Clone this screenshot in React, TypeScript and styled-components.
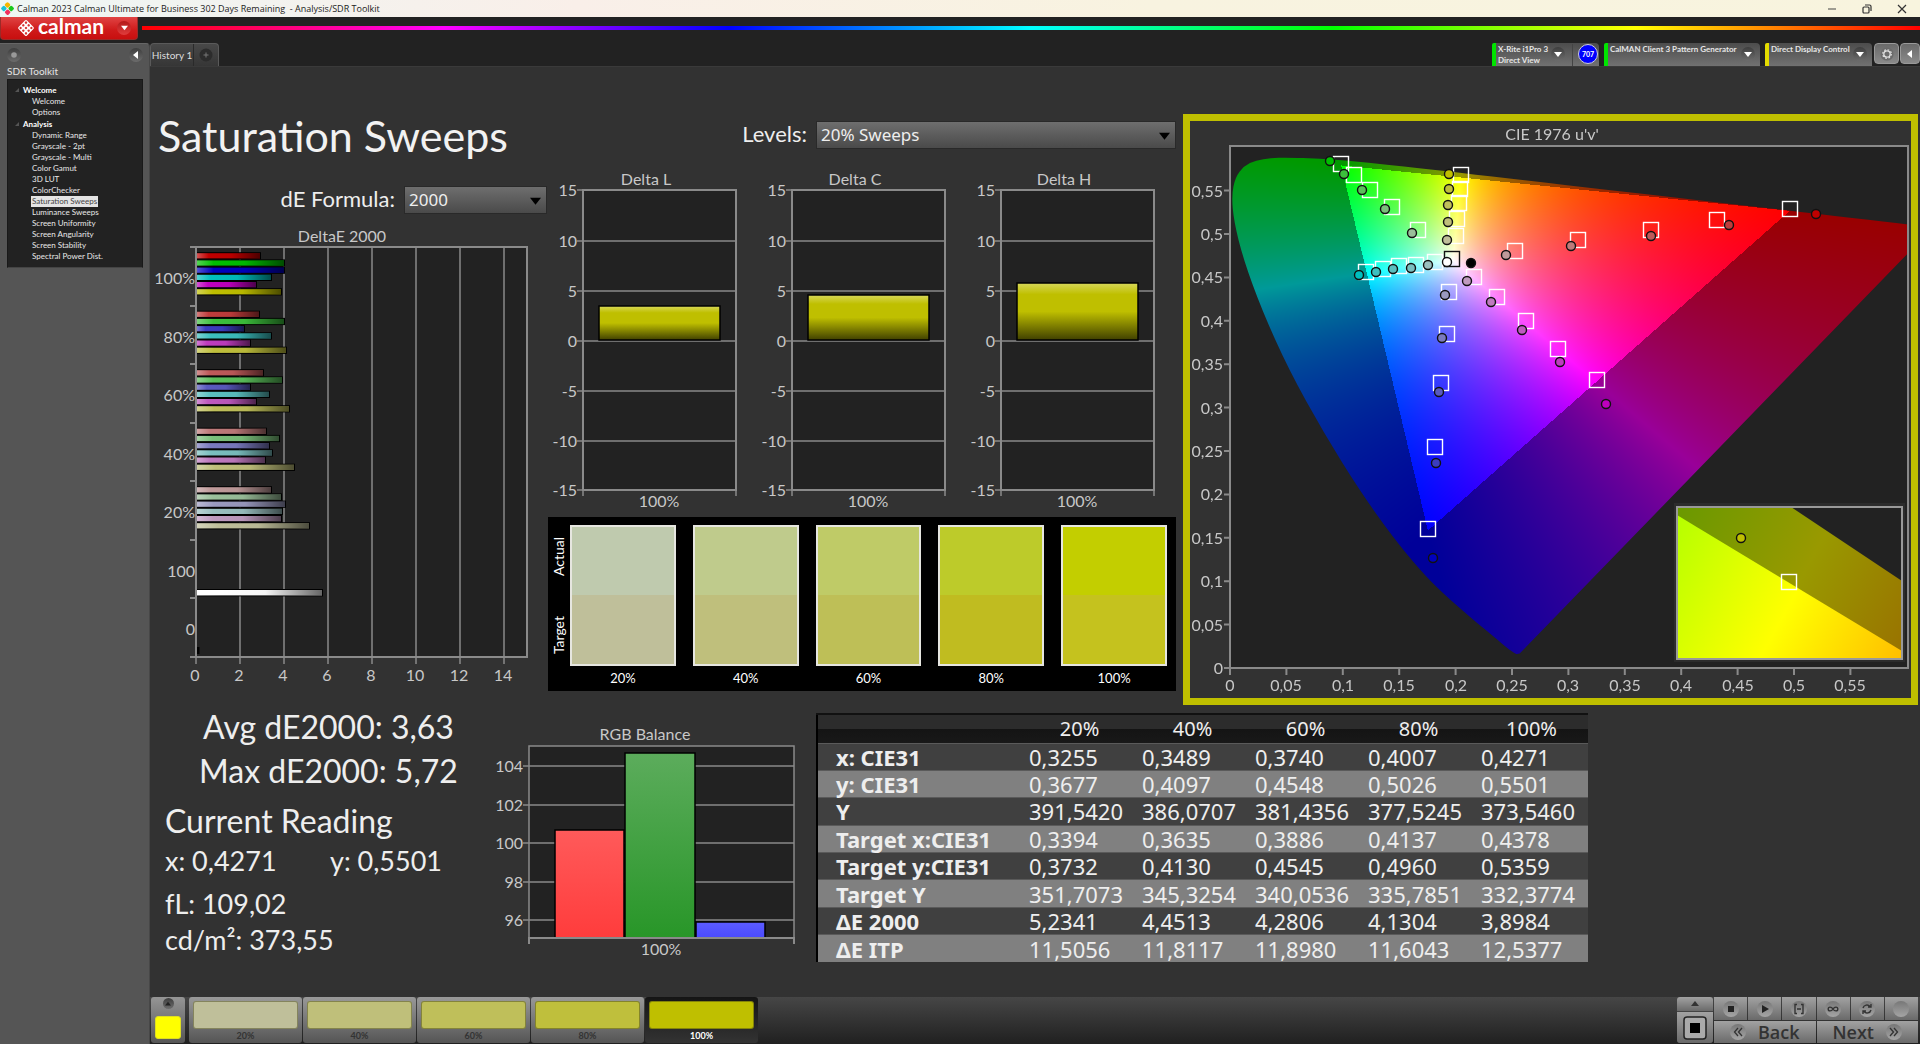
import React, { useLayoutEffect, useRef } from "react";
import styled, { createGlobalStyle } from "styled-components";

/* ------------------------------------------------------------------ */
/* Data                                                                */
/* ------------------------------------------------------------------ */

type RGB = [number, number, number];
const FULL = 191;
const WASH: Record<string, number> = { "100%": 0, "80%": 60, "60%": 90, "40%": 122, "20%": 154 };
const HUES: Record<string, RGB> = {
  red: [1, 0, 0],
  green: [0, 1, 0],
  blue: [0, 0, 1],
  cyan: [0, 1, 1],
  magenta: [1, 0, 1],
  yellow: [1, 1, 0],
};
const mixHue = (hue: string, level: string): string =>
  `rgb(${HUES[hue].map((c) => (c ? FULL : WASH[level])).join(",")})`;

const deltaE: { level: string; lengths: number[] }[] = [
  { level: "100%", lengths: [65, 89, 89, 76, 61, 86] },
  { level: "80%", lengths: [64, 89, 49, 76, 55, 91] },
  { level: "60%", lengths: [68, 87, 55, 74, 61, 94] },
  { level: "40%", lengths: [71, 84, 74, 77, 70, 99] },
  { level: "20%", lengths: [76, 86, 90, 87, 86, 114] },
];

const tree = [
  { name: "Welcome", items: ["Welcome", "Options"] },
  {
    name: "Analysis",
    items: [
      "Dynamic Range",
      "Grayscale - 2pt",
      "Grayscale - Multi",
      "Color Gamut",
      "3D LUT",
      "ColorChecker",
      "Saturation Sweeps",
      "Luminance Sweeps",
      "Screen Uniformity",
      "Screen Angularity",
      "Screen Stability",
      "Spectral Power Dist.",
    ],
  },
];

const swatches = [
  { level: "20%", actual: "#bfcaae", target: "#bfbf9a" },
  { level: "40%", actual: "#bfcb8c", target: "#bfbf7c" },
  { level: "60%", actual: "#bfcb67", target: "#bebf57" },
  { level: "80%", actual: "#bdcb2a", target: "#c0bc20" },
  { level: "100%", actual: "#c3ce00", target: "#c5c21e" },
];

const levels = ["20%", "40%", "60%", "80%", "100%"];

const readings = [
  { name: "x: CIE31", cells: ["0,3255", "0,3489", "0,3740", "0,4007", "0,4271"] },
  { name: "y: CIE31", cells: ["0,3677", "0,4097", "0,4548", "0,5026", "0,5501"] },
  { name: "Y", cells: ["391,5420", "386,0707", "381,4356", "377,5245", "373,5460"] },
  { name: "Target x:CIE31", cells: ["0,3394", "0,3635", "0,3886", "0,4137", "0,4378"] },
  { name: "Target y:CIE31", cells: ["0,3732", "0,4130", "0,4545", "0,4960", "0,5359"] },
  { name: "Target Y", cells: ["351,7073", "345,3254", "340,0536", "335,7851", "332,3774"] },
  { name: "ΔE 2000", cells: ["5,2341", "4,4513", "4,2806", "4,1304", "3,8984"] },
  { name: "ΔE ITP", cells: ["11,5056", "11,8117", "11,8980", "11,6043", "12,5377"] },
];

/* ------------------------------------------------------------------ */
/* Styles                                                              */
/* ------------------------------------------------------------------ */

const UI = `Lato, "Noto Sans", sans-serif`;
const SEGOE = `"Noto Sans", "Open Sans", sans-serif`;

const Global = createGlobalStyle`
  *, *::before, *::after { box-sizing: border-box; }
  body { margin: 0; background: #222; font-family: ${UI}; color: #eee; }
  button, select { font: inherit; color: inherit; border: 0; padding: 0; margin: 0; background: none; }
  svg { display: block; }
  h1, h2, p, ul { margin: 0; padding: 0; font-weight: 400; }
  ul { list-style: none; }
`;

const Window = styled.div`
  min-height: 100vh;
  display: flex;
  flex-direction: column;
`;

const TitleBar = styled.header`
  height: 17px;
  display: flex;
  align-items: center;
  gap: 3px;
  padding-left: 1px;
  background: linear-gradient(90deg, #eef6f4, #f9efe9 30%, #f8f3e0 60%, #f8f4de);
  color: #222;
  font: 9px/16px "Open Sans", ${SEGOE};
  white-space: pre;
`;
const WindowButtons = styled.div`
  margin-left: auto;
  display: flex;
  gap: 11px;
  padding-right: 6px;
`;
const WindowButton = styled.button`
  width: 24px;
  height: 16px;
  display: grid;
  place-items: center;
`;

const BrandBar = styled.div`
  display: flex;
  gap: 4px;
  height: 26px;
`;
const BrandButton = styled.button`
  width: 138px;
  height: 23px;
  padding: 0 6px 1px 16px;
  display: flex;
  align-items: center;
  gap: 3px;
  border: 1px solid #9c2a28;
  border-top: 0;
  border-radius: 0 0 4px 4px;
  background: linear-gradient(#e04444, #cf1a1a 60%, #c80f0f);
  color: #fff;
  font: 700 21px/20px ${UI};
`;
const BrandName = styled.span`
  flex: 1;
  text-align: left;
  padding-bottom: 4px;
`;
const Rainbow = styled.div`
  flex: 1;
  height: 4px;
  margin-top: 9px;
  background: linear-gradient(90deg, #f00, #f0f 17%, #00f 33%, #0ff 50%, #0f0 67%, #ff0 84%, #f00);
`;

const Shell = styled.div`
  flex: 1;
  display: grid;
  grid-template-columns: 150px minmax(0, 1fr);
`;

const Sidebar = styled.aside`
  background: #555;
  border-top: 1px solid #666;
  border-right: 1px solid #474747;
  border-radius: 0 4px 0 0;
  padding: 4px 6px 0 7px;
`;
const SidebarTop = styled.div`
  display: flex;
  justify-content: space-between;
  height: 16px;
`;
const RoundButton = styled.button<{ $size?: number }>`
  width: ${(p) => p.$size ?? 14}px;
  height: ${(p) => p.$size ?? 14}px;
  border-radius: 50%;
  display: grid;
  place-items: center;
  flex: none;
  background: linear-gradient(#3e3e3e, #6c6c6c);
`;
const BrandArrow = styled.span`
  width: 14px;
  height: 14px;
  border-radius: 50%;
  display: grid;
  place-items: center;
  background: linear-gradient(#b31a1a, #e03c3c);
`;
const SidebarTitle = styled.h2`
  font-size: 10px;
  line-height: 15px;
  color: #e4e4e4;
`;
const Tree = styled.nav`
  background: #222;
  border: 1px solid #191919;
  border-bottom-color: #444;
  padding: 4px 0 5px;
`;
const Branch = styled.div`
  display: flex;
  align-items: center;
  gap: 4px;
  height: 12px;
  padding-left: 7px;
  font-size: 8px;
  font-weight: 700;
  color: #fff;
`;
const Leaf = styled.button<{ $on: boolean }>`
  display: block;
  height: 11px;
  margin-left: 23px;
  padding: 0 1px;
  font-size: 8px;
  line-height: 11px;
  color: ${(p) => (p.$on ? "#444" : "#e8e8e8")};
  background: ${(p) => (p.$on ? "#e4e4e4" : "none")};
`;

const Main = styled.main`
  display: flex;
  flex-direction: column;
  min-width: 0;
`;
const TabRow = styled.div`
  display: flex;
  height: 23px;
  justify-content: space-between;
`;
const Tabs = styled.div`
  display: flex;
  border: 1px solid #5a5a5a;
  border-bottom: 0;
  border-radius: 4px 4px 0 0;
  background: linear-gradient(#484848, #363636);
`;
const Tab = styled.button`
  width: 43px;
  border-right: 1px solid #2a2a2a;
  font-size: 10px;
  color: #ddd;
`;
const AddTab = styled.button`
  width: 24px;
  display: grid;
  place-items: center;
`;
const Devices = styled.div`
  display: flex;
  gap: 5px;
`;
const Device = styled.div<{ $tone: string; $w: number; $end?: number }>`
  width: ${(p) => p.$w}px;
  display: flex;
  border-left: 4px solid ${(p) => p.$tone};
  border-radius: 2px 4px 0 0;
  background: linear-gradient(#4c4c4c, #717171);
  font-size: 8px;
  line-height: 11px;
  font-weight: 700;
  color: #e6e6e6;
  padding: 1px ${(p) => p.$end ?? 5}px 0 2px;
`;
const DeviceName = styled.span`
  flex: 1;
  white-space: nowrap;
`;
const DeviceDrop = styled(RoundButton)`
  margin-top: 3px;
`;
const MeterSlot = styled.span`
  margin-left: 7px;
  padding-left: 5px;
  border-left: 1px solid #444;
`;
const Meter = styled.span`
  display: block;
  width: 20px;
  height: 20px;
  border-radius: 50%;
  border: 1px solid #ccd;
  background: #00f;
  color: #fff;
  font-size: 7px;
  line-height: 18px;
  text-align: center;
`;
const CornerButtons = styled.div`
  display: flex;
  gap: 1px;
  margin-left: -3px;
`;
const CornerButton = styled.button<{ $w: number }>`
  width: ${(p) => p.$w}px;
  height: 21px;
  display: grid;
  place-items: center;
  border: 1px solid #999;
  border-radius: 4px;
  background: linear-gradient(#6a6a6a, #8a8a8a);
`;

const Board = styled.div`
  flex: 1;
  background: #323232;
  border-top: 1px solid #3a3a3a;
  padding: 47px 2px 0 0;
`;
const UpperRow = styled.section`
  display: grid;
  grid-template-columns: 398fr 635fr 735fr;
`;
const LowerRow = styled.section`
  display: grid;
  grid-template-columns: 353fr 313fr 772fr 330fr;
  align-items: start;
`;
const Column = styled.div`
  min-width: 0;
`;
const Title = styled.h1`
  font-size: 43px;
  line-height: 44px;
  padding-left: 8px;
  color: #f2f2f2;
  white-space: nowrap;
`;
const Field = styled.div<{ $top: number; $right: number }>`
  display: flex;
  justify-content: flex-end;
  align-items: center;
  gap: 9px;
  height: 28px;
  margin-top: ${(p) => p.$top}px;
  padding-right: ${(p) => p.$right}px;
`;
const FieldLabel = styled.label`
  font-size: 22px;
  line-height: 26px;
  padding-bottom: 2px;
  color: #eee;
`;
const SelectBox = styled.div<{ $w: number }>`
  display: grid;
  width: ${(p) => p.$w}px;
  align-items: center;
  > * { grid-area: 1 / 1; }
  > svg { justify-self: end; margin-right: 6px; pointer-events: none; }
`;
const Select = styled.select`
  appearance: none;
  width: 100%;
  height: 28px;
  padding: 0 4px;
  border: 1px solid #292929;
  background: linear-gradient(#6e6e6e, #4a4a4a);
  color: #eee;
  font: 17px/24px ${SEGOE};
`;

const ChartSvg = styled.svg`
  width: 100%;
  height: auto;
  overflow: visible;
  font-family: ${UI};
  font-size: 16px;
  fill: #c8c8c8;
`;
const DeltaEBox = styled.div`
  margin-top: 10px;
`;
const DeltaRow = styled.div`
  display: grid;
  grid-template-columns: repeat(3, 209fr) 8fr;
  margin-top: 19px;
`;

const SwatchPanel = styled.figure`
  margin: 4px 7px 0 0;
  height: 174px;
  background: #000;
  display: grid;
  grid-template-columns: 22px minmax(0, 1fr);
  padding: 8px 9px 0 0;
`;
const SideLabels = styled.div`
  display: grid;
  grid-template-rows: 64px 92px;
  align-content: start;
  justify-items: center;
  align-items: center;
`;
const SideLabel = styled.span`
  writing-mode: vertical-rl;
  transform: rotate(180deg);
  font-size: 14px;
  line-height: 22px;
  color: #fff;
`;
const SwatchGrid = styled.div`
  display: grid;
  grid-template-columns: repeat(5, minmax(0, 1fr));
  column-gap: 17px;
`;
const SwatchItem = styled.div`
  text-align: center;
  font-size: 13px;
  line-height: 24px;
  color: #fff;
`;
const SwatchColors = styled.div<{ $a: string; $b: string }>`
  height: 141px;
  border: 2px solid #e6e6e0;
  background: linear-gradient(${(p) => `${p.$a} 50%, ${p.$b} 50%`});
`;

const CiePanel = styled.figure`
  margin: 0;
  align-self: start;
  border: 7px solid #bfbf00;
  display: grid;
  > * { grid-area: 1 / 1; }
`;
const CieCanvas = styled.canvas`
  width: 100%;
  height: auto;
  display: block;
`;

const Summary = styled.div`
  padding-left: 15px;
  color: #eee;
  white-space: nowrap;
`;
const Big = styled.p<{ $indent?: number }>`
  font-size: 32px;
  line-height: 44px;
  padding-left: ${(p) => p.$indent ?? 0}px;
`;
const Heading = styled.h2`
  font-size: 32px;
  line-height: 44px;
  margin-top: 6px;
`;
const Pair = styled.div`
  display: grid;
  grid-template-columns: 165px 1fr;
  font-size: 27px;
  line-height: 36px;
`;
const Line = styled.p<{ $gap?: number }>`
  font-size: 27px;
  line-height: 36px;
  margin-top: ${(p) => p.$gap ?? 0}px;
`;

const Table = styled.table`
  width: 100%;
  height: 249px;
  margin-top: 8px;
  border-collapse: collapse;
  border-left: 2px solid #000;
  border-top: 2px solid #111;
  table-layout: fixed;
  font: 22px/24px ${SEGOE};
  color: #eee;
`;
const HeadCell = styled.th<{ $w?: number }>`
  width: ${(p) => (p.$w ? `${p.$w}px` : "auto")};
  height: 29px;
  padding: 0;
  background: linear-gradient(#2c2c2c 50%, #141414 50%, #181818);
  font-size: 20px;
  font-weight: 400;
`;
const BodyRow = styled.tr`
  background: #404040;
  &:nth-child(even) { background: #808080; }
`;
const RowHead = styled.th`
  height: 27px;
  padding: 0 0 0 18px;
  text-align: left;
  font-weight: 700;
  white-space: nowrap;
  border-top: 1px solid #5a5a5a;
`;
const Cell = styled.td`
  padding: 0 0 0 6px;
  border-top: 1px solid #5a5a5a;
`;

const Footer = styled.footer`
  display: flex;
  height: 47px;
  gap: 1px;
  padding: 0 2px 1px 1px;
  background: linear-gradient(#464646, #202020);
`;
const PatternToggle = styled.div`
  width: 34px;
  margin-right: 3px;
  padding: 1px 4px 4px;
  display: flex;
  flex-direction: column;
  align-items: center;
  justify-content: space-between;
  border-radius: 3px;
  background: linear-gradient(#959595, #565656);
`;
const PatternColor = styled.button`
  width: 26px;
  height: 23px;
  border-radius: 3px;
  border: 1px solid #dede20;
  background: #ff0;
`;
const LevelButton = styled.button<{ $on: boolean }>`
  width: 113px;
  padding: 4px 4px 0;
  border-radius: 3px;
  background: ${(p) => (p.$on ? "linear-gradient(#151515, #333)" : "linear-gradient(#999, #555)")};
  color: ${(p) => (p.$on ? "#fff" : "#333")};
  font-size: 9px;
  font-weight: 700;
  line-height: 14px;
`;
const LevelColor = styled.span<{ $c: string }>`
  display: block;
  height: 28px;
  border-radius: 3px;
  border: 1px solid rgba(60, 60, 20, 0.45);
  background: ${(p) => p.$c};
`;
const Transport = styled.div`
  margin-left: auto;
  display: grid;
  grid-template-columns: 36px 204px;
  gap: 1px;
`;
const StopStack = styled.div`
  display: grid;
  grid-template-rows: 14px 1fr;
  gap: 1px;
  border-radius: 3px;
  overflow: hidden;
  background: #444;
`;
const Metal = styled.button`
  display: flex;
  align-items: center;
  justify-content: center;
  gap: 12px;
  min-width: 0;
  background: linear-gradient(#a2a2a2, #6a6a6a);
  color: #333;
  font: 600 18px/20px "Open Sans", ${SEGOE};
`;
const TransportRows = styled.div`
  display: grid;
  grid-template-rows: 23px 22px;
  gap: 1px;
`;
const TransportRow = styled.div<{ $n: number }>`
  display: grid;
  grid-template-columns: repeat(${(p) => p.$n}, 1fr);
  gap: 1px;
`;
const Knob = styled.span`
  width: 16px;
  height: 16px;
  border-radius: 50%;
  display: grid;
  place-items: center;
  background: linear-gradient(#777, #a5a5a5);
`;

/* ------------------------------------------------------------------ */
/* Small drawings                                                      */
/* ------------------------------------------------------------------ */

const Triangle = ({ dir = "down", size = 8, color = "#fff" }: { dir?: "down" | "up" | "left"; size?: number; color?: string }) => {
  const d = { down: "M0 2h8L4 7z", up: "M0 6h8L4 1z", left: "M6 0v8L1 4z" }[dir];
  return (
    <svg width={size} height={size} viewBox="0 0 8 8">
      <path d={d} fill={color} />
    </svg>
  );
};

const AppIcon = () => (
  <svg width="13" height="13" viewBox="0 0 14 14">
    <rect x="4.6" y="0.6" width="5" height="5" rx="1.6" transform="rotate(45 7 3)" fill="#f5b800" />
    <rect x="0.6" y="4.5" width="5" height="5" rx="1.6" transform="rotate(45 3 7)" fill="#19c3d8" />
    <rect x="8.5" y="4.5" width="5" height="5" rx="1.6" transform="rotate(45 11 7)" fill="#18c91c" />
    <rect x="4.6" y="8.4" width="5" height="5" rx="1.6" transform="rotate(45 7 11)" fill="#f0305c" />
  </svg>
);

const BrandMark = () => (
  <svg width="18" height="18" viewBox="0 0 18 18">
    <g transform="rotate(45 9 9)">
      <rect x="3" y="3" width="12" height="12" rx="1.5" fill="#fff" />
      {[5.2, 9, 12.8].map((x) => [5.2, 9, 12.8].map((y) => <circle key={`${x}-${y}`} cx={x} cy={y} r="1.2" fill="#d63030" />))}
    </g>
  </svg>
);

const Gear = () => (
  <svg width="14" height="14" viewBox="0 0 14 14">
    <circle cx="7" cy="7" r="6.6" fill="#6b6b6b" />
    <circle cx="7" cy="7" r="3.2" fill="none" stroke="#e0e0e0" strokeWidth="1.3" />
    <circle cx="7" cy="7" r="4.3" fill="none" stroke="#e0e0e0" strokeWidth="1.2" strokeDasharray="1.7 1.68" />
  </svg>
);

/* ------------------------------------------------------------------ */
/* Charts                                                              */
/* ------------------------------------------------------------------ */

const LINE = "#8a8a8a";

const DeltaEChart = () => (
  <ChartSvg viewBox="0 0 398 466" role="img" aria-label="DeltaE 2000">
    <defs>
      <linearGradient id="gloss" x1="0" x2="1" y1="0" y2="0">
        <stop offset="0" stopColor="#fff" stopOpacity="0.35" />
        <stop offset="0.2" stopColor="#fff" stopOpacity="0" />
        <stop offset="0.2" stopColor="#000" stopOpacity="0" />
        <stop offset="0.55" stopColor="#000" stopOpacity="0.04" />
        <stop offset="1" stopColor="#000" stopOpacity="0.6" />
      </linearGradient>
    </defs>
    <text x="192" y="18" textAnchor="middle">DeltaE 2000</text>
    <rect x="46" y="23" width="331" height="410" fill="#222" stroke={LINE} strokeWidth="2" />
    {[0, 2, 4, 6, 8, 10, 12, 14].map((n) => (
      <g key={n}>
        <path d={`M${46 + n * 22} 23V440`} stroke={LINE} strokeWidth="1.5" />
        <text x={45 + n * 22} y="457" textAnchor="middle">{n}</text>
      </g>
    ))}
    {[0, 1, 2, 3, 4, 5, 6, 7].map((n) => (
      <path key={n} d={`M40 ${Math.round(23 + n * 58.5)}h6`} stroke={LINE} strokeWidth="2" />
    ))}
    {["100%", "80%", "60%", "40%", "20%", "100", "0"].map((t, i) => (
      <text key={i} x="45" y={60 + Math.round(i * 58.5)} textAnchor="end">{t}</text>
    ))}
    {deltaE.map((g, gi) =>
      g.lengths.map((len, i) => {
        const y = 29 + gi * 58.5 + i * 7.2;
        return (
          <g key={`${gi}-${i}`}>
            <rect x="46" y={y - 0.8} width={len} height="7.2" fill="#000" />
            <rect x="46" y={y + 0.2} width={len - 1} height="5.2" fill={mixHue(Object.keys(HUES)[i], g.level)} />
            <rect x="46" y={y + 0.2} width={len - 1} height="5.2" fill="url(#gloss)" />
          </g>
        );
      })
    )}
    <g>
      <rect x="46" y="365" width="127" height="7.4" fill="#000" />
      <rect x="46" y="366" width="126" height="5.4" fill="#fff" />
      <rect x="46" y="366" width="126" height="5.4" fill="url(#gloss)" />
      <rect x="46" y="423" width="3.5" height="7" fill="#000" />
    </g>
    <path d="M46 23V433" stroke={LINE} strokeWidth="2" />
  </ChartSvg>
);

const DeltaChart = ({ name, value }: { name: string; value: number }) => {
  const zero = 173;
  const top = zero - value * 10;
  return (
    <ChartSvg viewBox="0 0 209 345" role="img" aria-label={name}>
      <defs>
        <linearGradient id="olive" x1="0" x2="0" y1="0" y2="1">
          <stop offset="0" stopColor="#d8d85a" />
          <stop offset="0.2" stopColor="#bfbf00" />
          <stop offset="0.5" stopColor="#bfbf00" />
          <stop offset="1" stopColor="#404000" />
        </linearGradient>
      </defs>
      <text x="98" y="17" textAnchor="middle">{name}</text>
      <rect x="35" y="22" width="153" height="300" fill="#222" stroke={LINE} strokeWidth="2" />
      {[15, 10, 5, 0, -5, -10, -15].map((n) => {
        const y = n === 15 ? 22 : n === -15 ? 322 : zero - n * 10;
        return (
          <g key={n}>
            <path d={`M29 ${y}H188`} stroke={LINE} strokeWidth="1.5" />
            <text x="29" y={y + 6} textAnchor="end">{n}</text>
          </g>
        );
      })}
      <path d="M35 322v6M188 322v6" stroke={LINE} strokeWidth="1.5" />
      <rect x="51" y={top} width="121" height={zero - top - 1} fill="url(#olive)" stroke="#000" strokeWidth="1.5" />
      <text x="111" y="339" textAnchor="middle">100%</text>
    </ChartSvg>
  );
};

const RgbChart = () => (
  <ChartSvg viewBox="0 0 313 252" role="img" aria-label="RGB Balance">
    <defs>
      {[["r", "#ff5a5a", "#ff3c3c"], ["g", "#5cac5c", "#289628"], ["b", "#5c5cff", "#4a4aff"]].map(([id, a, b]) => (
        <linearGradient key={id} id={`bal-${id}`} x1="0" x2="0" y1="0" y2="1">
          <stop offset="0" stopColor={a} />
          <stop offset="1" stopColor={b} />
        </linearGradient>
      ))}
    </defs>
    <text x="142" y="35" textAnchor="middle">RGB Balance</text>
    <rect x="26" y="41" width="265" height="192" fill="#222" stroke={LINE} strokeWidth="1.5" />
    {[104, 102, 100, 98, 96].map((n, i) => {
      const y = [61, 100, 138, 177, 215][i];
      return (
        <g key={n}>
          <path d={`M20 ${y}H291`} stroke={LINE} strokeWidth="1.5" />
          <text x="20" y={y + 6} textAnchor="end">{n}</text>
        </g>
      );
    })}
    <g stroke="#000" strokeWidth="1.5">
      <rect x="52" y="125" width="69" height="108" fill="url(#bal-r)" />
      <rect x="122" y="48" width="70" height="185" fill="url(#bal-g)" />
      <rect x="193" y="217" width="69" height="16" fill="url(#bal-b)" />
    </g>
    <path d="M26 239V233H291V239" fill="none" stroke={LINE} strokeWidth="2" />
    <text x="158" y="250" textAnchor="middle">100%</text>
  </ChartSvg>
);

/* Chromaticity diagram ------------------------------------------------ */

const CIE = { w: 721, h: 577, x0: 40, y0: 547, su: 1128, sv: 870, top: 25, right: 718 };

const LOCUS: [number, number][] = [
  [0.1741, 0.005], [0.1726, 0.0048], [0.1714, 0.0051], [0.1689, 0.0069], [0.1644, 0.0109], [0.1566, 0.0177],
  [0.144, 0.0297], [0.1355, 0.0399], [0.1241, 0.0578], [0.1096, 0.0868], [0.0913, 0.1327], [0.0687, 0.2007],
  [0.0454, 0.295], [0.0235, 0.4127], [0.0082, 0.5384], [0.0039, 0.6548], [0.0139, 0.7502], [0.0389, 0.812],
  [0.0743, 0.8338], [0.1142, 0.8262], [0.1547, 0.8059], [0.2296, 0.7543], [0.3016, 0.6923], [0.3731, 0.6245],
  [0.4441, 0.5547], [0.5125, 0.4866], [0.5752, 0.4242], [0.627, 0.3725], [0.6658, 0.334], [0.6915, 0.3083],
  [0.719, 0.2809], [0.7347, 0.2653],
];

const toUv = ([x, y]: [number, number]): [number, number] => {
  const d = -2 * x + 12 * y + 3;
  return [(4 * x) / d, (9 * y) / d];
};

/* Linear display-P3 components of a u'v' chromaticity at Y = 1. */
const p3 = (u: number, v: number): RGB => {
  const X = (9 * u) / (4 * v);
  const Z = (12 - 3 * u - 20 * v) / (4 * v);
  return [
    2.4934969 * X - 0.9313836 - 0.4027108 * Z,
    -0.829489 * X + 1.7626641 + 0.0236247 * Z,
    0.0358458 * X - 0.0761724 + 0.9568845 * Z,
  ];
};

const paintGamut = (canvas: HTMLCanvasElement) => {
  const ctx = canvas.getContext("2d");
  if (!ctx) return;
  const { w, h, x0, y0, su, sv, top, right } = CIE;
  const layer = document.createElement("canvas");
  layer.width = w;
  layer.height = h;
  const lctx = layer.getContext("2d")!;
  const img = lctx.createImageData(w, h);
  for (let py = 0; py < h; py++) {
    for (let px = 0; px < w; px++) {
      const u = (px + 0.5 - x0) / su;
      const v = Math.max((y0 - py - 0.5) / sv, 0.001);
      const rgb = p3(u, v);
      const peak = Math.max(...rgb);
      const inside = Math.min(...rgb) >= 0;
      const i = (py * w + px) * 4;
      for (let c = 0; c < 3; c++) {
        img.data[i + c] = (Math.max(rgb[c], 0) / peak) * (inside ? 255 : 153);
      }
      img.data[i + 3] = 255;
    }
  }
  lctx.putImageData(img, 0, 0);

  ctx.fillStyle = "#323232";
  ctx.fillRect(0, 0, w, h);
  ctx.fillStyle = "#222";
  ctx.fillRect(x0, top, right - x0, y0 - top);
  ctx.save();
  ctx.beginPath();
  ctx.rect(x0, top, right - x0, y0 - top);
  ctx.clip();
  const pts = LOCUS.map(toUv).map(([u, v]) => [x0 + u * su, y0 - v * sv]);
  ctx.beginPath();
  ctx.moveTo(pts[0][0], pts[0][1]);
  for (let i = 1; i < pts.length - 1; i++) {
    ctx.quadraticCurveTo(pts[i][0], pts[i][1], (pts[i][0] + pts[i + 1][0]) / 2, (pts[i][1] + pts[i + 1][1]) / 2);
  }
  ctx.lineTo(pts[pts.length - 1][0], pts[pts.length - 1][1]);
  ctx.closePath();
  ctx.clip();
  ctx.drawImage(layer, 0, 0);
  ctx.restore();
};

/* Marker centres in diagram units, from 100% down to 20%. */
const sweeps: { hue: string; targets: [number, number][]; actual: [number, number][] }[] = [
  { hue: "green", targets: [[151, 43], [164, 54], [180, 69], [202, 86], [228, 109]], actual: [[140, 40], [154, 53], [172, 69], [195, 88], [222, 112]] },
  { hue: "yellow", targets: [[271, 54], [270, 68], [269, 82], [267, 98], [266, 115]], actual: [[259, 53], [259, 68], [258, 84], [258, 101], [257, 119]] },
  { hue: "cyan", targets: [[176, 151], [193, 148], [209, 145], [226, 144], [245, 141]], actual: [[169, 154], [186, 151], [203, 148], [221, 147], [238, 144]] },
  { hue: "blue", targets: [[238, 408], [245, 326], [251, 262], [257, 213], [259, 171]], actual: [[243, 437], [246, 342], [249, 271], [252, 217], [255, 174]] },
  { hue: "magenta", targets: [[407, 259], [368, 228], [336, 200], [307, 176], [284, 156]], actual: [[416, 283], [370, 241], [332, 209], [301, 181], [277, 160]] },
  { hue: "red", targets: [[600, 88], [527, 99], [461, 109], [388, 119], [325, 130]], actual: [[626, 93], [539, 104], [461, 115], [381, 125], [316, 134]] },
];

const Square = ({ x, y, color = "#fff" }: { x: number; y: number; color?: string }) => (
  <rect x={x - 7.5} y={y - 7.5} width="15" height="15" fill="none" stroke={color} strokeWidth="1.4" />
);
const Dot = ({ x, y, color }: { x: number; y: number; color: string }) => (
  <circle cx={x} cy={y} r="4.5" fill={color} stroke="#111" strokeWidth="1.4" />
);

const comma = (n: number) => String(n).replace(".", ",");

const CieChart = () => {
  const ref = useRef<HTMLCanvasElement>(null);
  useLayoutEffect(() => {
    if (ref.current) paintGamut(ref.current);
  }, []);
  const steps = Array.from({ length: 12 }, (_, i) => Math.round(i * 5) / 100);
  const { w, h, x0, y0, su, top, right } = CIE;
  return (
    <CiePanel>
      <CieCanvas ref={ref} width={w} height={h} />
      <ChartSvg viewBox={`0 0 ${w} ${h}`} role="img" aria-label="CIE 1976 u'v' chromaticity diagram">
        <defs>
          <linearGradient id="inLight" gradientUnits="userSpaceOnUse" x1="470" y1="420" x2="722" y2="560">
            <stop offset="0" stopColor="#b4ff00" />
            <stop offset="0.5" stopColor="#ff0" />
            <stop offset="1" stopColor="#ffb400" />
          </linearGradient>
          <linearGradient id="inDark" gradientUnits="userSpaceOnUse" x1="470" y1="390" x2="722" y2="530">
            <stop offset="0" stopColor="#659900" />
            <stop offset="0.54" stopColor="#990" />
            <stop offset="1" stopColor="#997000" />
          </linearGradient>
        </defs>
        <text x="362" y="19" textAnchor="middle">CIE 1976 u'v'</text>
        <rect x={x0} y={top} width={right - x0} height={y0 - top} fill="none" stroke={LINE} strokeWidth="2" />
        {steps.map((s) => (
          <g key={s}>
            <path d={`M${x0 - 6} ${y0 - s * 868}h6M${x0 + s * su} ${y0}v7`} stroke={LINE} strokeWidth="2" />
            <text x={x0 - 7} y={y0 + 6 - Math.round(s * 868)} textAnchor="end">{comma(s)}</text>
            <text x={x0 + Math.round(s * su)} y={y0 + 23} textAnchor="middle">{comma(s)}</text>
          </g>
        ))}
        {sweeps.map((s) => s.targets.map(([x, y], i) => <Square key={`${s.hue}${i}`} x={x} y={y} />))}
        <Square x={262} y={138} color="#111" />
        {sweeps.map((s) =>
          s.actual.map(([x, y], i) => <Dot key={`${s.hue}${i}`} x={x} y={y} color={mixHue(s.hue, levels[4 - i])} />)
        )}
        <Dot x={257} y={141} color="#fff" />
        <Dot x={281} y={142} color="#000" />
        <rect x="484" y="382" width="231" height="159" fill="#2c2c2c" />
        <rect x="487" y="386" width="225" height="152" fill="#222" />
        <path d="M487 386H601L712 460V538H487z" fill="url(#inDark)" />
        <path d="M487 394L712 530V538H487z" fill="url(#inLight)" />
        <rect x="487" y="386" width="225" height="152" fill="none" stroke="#999" strokeWidth="2" />
        <Square x={599} y={461} />
        <Dot x={551} y={417} color="#bfbf00" />
      </ChartSvg>
    </CiePanel>
  );
};

/* ------------------------------------------------------------------ */
/* App                                                                 */
/* ------------------------------------------------------------------ */

const Dropdown = ({ id, label, value, width, top, right }: { id: string; label: string; value: string; width: number; top: number; right: number }) => (
  <Field $top={top} $right={right}>
    <FieldLabel htmlFor={id}>{label}</FieldLabel>
    <SelectBox $w={width}>
      <Select id={id} defaultValue={value}>
        <option>{value}</option>
      </Select>
      <Triangle color="#000" size={11} />
    </SelectBox>
  </Field>
);

const transportIcons = [
  { name: "Stop", icon: <rect x="3" y="3" width="6" height="6" /> },
  { name: "Play", icon: <path d="M3 2l7 4-7 4z" /> },
  { name: "Read range", icon: <path d="M4 1.5H2v9h2M8 1.5h2v9H8M4 6h4" fill="none" stroke="#333" strokeWidth="1.4" /> },
  { name: "Continuous", icon: <path d="M6 6C4.500 3.500 1.200 3.500 1.200 6S4.500 8.500 6 6s4.800-2.500 4.800 0S7.500 8.500 6 6z" fill="none" stroke="#333" strokeWidth="1.4" /> },
  { name: "Refresh", icon: <path d="M2 5a4 4 0 0 1 7-1.500M10 7a4 4 0 0 1-7 1.500M10 1v3H7M2 11V8h3" fill="none" stroke="#333" strokeWidth="1.4" /> },
  { name: "Record", icon: null },
];

const Chevrons = ({ flip }: { flip?: boolean }) => (
  <Knob>
    <svg width="12" height="12" viewBox="0 0 12 12" fill="none" stroke="#333" strokeWidth="1.3">
      <path d={flip ? "M2 2l3.500 4L2 10M6 2l3.500 4L6 10" : "M6 2L2.500 6 6 10M10 2L6.500 6l3.500 4"} />
    </svg>
  </Knob>
);

export default function App() {
  return (
    <Window>
      <Global />
      <TitleBar>
        <AppIcon />
        <span>Calman 2023 Calman Ultimate for Business 302 Days Remaining  - Analysis/SDR Toolkit</span>
        <WindowButtons>
          <WindowButton aria-label="Minimize">
            <svg width="10" height="10" viewBox="0 0 10 10"><path d="M1 5h8" stroke="#444" /></svg>
          </WindowButton>
          <WindowButton aria-label="Restore">
            <svg width="10" height="10" viewBox="0 0 10 10" fill="none" stroke="#333" strokeWidth="1.2">
              <rect x="1" y="3" width="6" height="6" rx="1" />
              <path d="M3 1h4.500a1.500 1.500 0 0 1 1.500 1.500V7" />
            </svg>
          </WindowButton>
          <WindowButton aria-label="Close">
            <svg width="10" height="10" viewBox="0 0 10 10"><path d="M1 1l8 8M9 1L1 9" stroke="#333" strokeWidth="1.2" /></svg>
          </WindowButton>
        </WindowButtons>
      </TitleBar>

      <BrandBar>
        <BrandButton>
          <BrandMark />
          <BrandName>calman</BrandName>
          <BrandArrow><Triangle size={7} /></BrandArrow>
        </BrandButton>
        <Rainbow />
      </BrandBar>

      <Shell>
        <Sidebar>
          <SidebarTop>
            <RoundButton aria-label="Pin">
              <svg width="8" height="8" viewBox="0 0 8 8"><circle cx="4" cy="4" r="2.800" fill="#999" /></svg>
            </RoundButton>
            <RoundButton aria-label="Collapse"><Triangle dir="left" /></RoundButton>
          </SidebarTop>
          <SidebarTitle>SDR Toolkit</SidebarTitle>
          <Tree>
            {tree.map((g) => (
              <div key={g.name}>
                <Branch>
                  <svg width="4" height="4" viewBox="0 0 4 4"><path d="M4 0v4H0z" fill="#555" /></svg>
                  {g.name}
                </Branch>
                <ul>
                  {g.items.map((t) => (
                    <li key={t}><Leaf $on={t === "Saturation Sweeps"}>{t}</Leaf></li>
                  ))}
                </ul>
              </div>
            ))}
          </Tree>
        </Sidebar>

        <Main>
          <TabRow>
            <Tabs>
              <Tab>History 1</Tab>
              <AddTab aria-label="Add history">
                <svg width="14" height="14" viewBox="0 0 14 14">
                  <circle cx="7" cy="7" r="6.500" fill="#2c2c2c" />
                  <path d="M4.500 7h5M7 4.500v5" stroke="#777" />
                </svg>
              </AddTab>
            </Tabs>
            <Devices>
              <Device $tone="#00e400" $w={107} $end={1}>
                <DeviceName>X-Rite i1Pro 3<br />Direct View</DeviceName>
                <DeviceDrop aria-label="Meter menu"><Triangle /></DeviceDrop>
                <MeterSlot><Meter>707</Meter></MeterSlot>
              </Device>
              <Device $tone="#00e400" $w={156}>
                <DeviceName>CalMAN Client 3 Pattern Generator</DeviceName>
                <DeviceDrop aria-label="Generator menu"><Triangle /></DeviceDrop>
              </Device>
              <Device $tone="#e4dc00" $w={107}>
                <DeviceName>Direct Display Control</DeviceName>
                <DeviceDrop aria-label="Display menu"><Triangle /></DeviceDrop>
              </Device>
              <CornerButtons>
                <CornerButton $w={25} aria-label="Settings"><Gear /></CornerButton>
                <CornerButton $w={20} aria-label="Collapse panel"><Triangle dir="left" /></CornerButton>
              </CornerButtons>
            </Devices>
          </TabRow>

          <Board>
            <UpperRow>
              <Column>
                <Title>Saturation Sweeps</Title>
                <Dropdown id="formula" label="dE Formula:" value="2000" width={143} top={28} right={1} />
                <DeltaEBox>
                  <DeltaEChart />
                </DeltaEBox>
              </Column>
              <Column>
                <Dropdown id="levels" label="Levels:" value="20% Sweeps" width={360} top={7} right={7} />
                <DeltaRow>
                  <DeltaChart name="Delta L" value={3.5} />
                  <DeltaChart name="Delta C" value={4.6} />
                  <DeltaChart name="Delta H" value={5.8} />
                </DeltaRow>
                <SwatchPanel>
                  <SideLabels>
                    <SideLabel>Actual</SideLabel>
                    <SideLabel>Target</SideLabel>
                  </SideLabels>
                  <SwatchGrid>
                    {swatches.map((s) => (
                      <SwatchItem key={s.level}>
                        <SwatchColors $a={s.actual} $b={s.target} />
                        {s.level}
                      </SwatchItem>
                    ))}
                  </SwatchGrid>
                </SwatchPanel>
              </Column>
              <CieChart />
            </UpperRow>

            <LowerRow>
              <Summary>
                <Big $indent={38}>Avg dE2000: 3,63</Big>
                <Big $indent={34}>Max dE2000: 5,72</Big>
                <Heading>Current Reading</Heading>
                <Pair>
                  <span>x: 0,4271</span>
                  <span>y: 0,5501</span>
                </Pair>
                <Line $gap={7}>fL: 109,02</Line>
                <Line>cd/m²: 373,55</Line>
              </Summary>
              <RgbChart />
              <Table>
                <thead>
                  <tr>
                    <HeadCell $w={206} aria-label="Reading" />
                    {levels.map((l) => <HeadCell key={l} scope="col">{l}</HeadCell>)}
                  </tr>
                </thead>
                <tbody>
                  {readings.map((r) => (
                    <BodyRow key={r.name}>
                      <RowHead scope="row">{r.name}</RowHead>
                      {r.cells.map((c, i) => <Cell key={i}>{c}</Cell>)}
                    </BodyRow>
                  ))}
                </tbody>
              </Table>
            </LowerRow>
          </Board>

          <Footer>
            <PatternToggle>
              <RoundButton $size={11} aria-label="Expand patterns"><Triangle dir="up" size={6} color="#222" /></RoundButton>
              <PatternColor aria-label="Current pattern" />
            </PatternToggle>
            {levels.map((l) => (
              <LevelButton key={l} $on={l === "100%"}>
                <LevelColor $c={mixHue("yellow", l)} />
                {l}
              </LevelButton>
            ))}
            <Transport>
              <StopStack>
                <Metal aria-label="Expand controls"><Triangle dir="up" color="#333" /></Metal>
                <Metal aria-label="Abort">
                  <svg width="24" height="24" viewBox="0 0 24 24">
                    <rect x="1" y="1" width="22" height="22" rx="3" fill="#aaa" stroke="#222" strokeWidth="1.500" />
                    <rect x="7" y="7" width="10" height="10" fill="#000" />
                  </svg>
                </Metal>
              </StopStack>
              <TransportRows>
                <TransportRow $n={6}>
                  {transportIcons.map((t) => (
                    <Metal key={t.name} aria-label={t.name}>
                      <Knob>
                        <svg width="12" height="12" viewBox="0 0 12 12" fill="#222">{t.icon}</svg>
                      </Knob>
                    </Metal>
                  ))}
                </TransportRow>
                <TransportRow $n={2}>
                  <Metal><Chevrons />Back</Metal>
                  <Metal>Next<Chevrons flip /></Metal>
                </TransportRow>
              </TransportRows>
            </Transport>
          </Footer>
        </Main>
      </Shell>
    </Window>
  );
}
